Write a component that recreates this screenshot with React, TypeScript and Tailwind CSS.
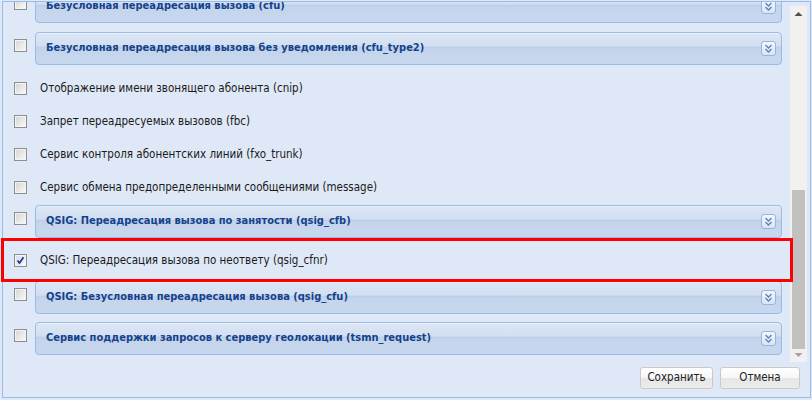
import React from "react";

const FONT = { fontFamily: "Tahoma, 'DejaVu Sans Condensed', 'Liberation Sans', sans-serif" };

function Check({ checked = false }: { checked?: boolean }) {
  return (
    <div className="w-[13px] h-[13px] border border-[#8e8e8e] bg-white shrink-0 flex">
      <div
        className={
          "flex-1 border border-[#f4f4f4] flex items-center justify-center " +
          (checked
            ? "bg-[linear-gradient(135deg,#d5deea,#f6f9fc)]"
            : "bg-[linear-gradient(135deg,#d6d6d6,#f8f8f8)]")
        }
      >
        {checked && (
          <svg width="9" height="9" viewBox="0 0 9 9">
            <path d="M1.5 4.5 L3.5 7 L7.5 1.2" fill="none" stroke="#1c3c8c" strokeWidth="1.8" />
          </svg>
        )}
      </div>
    </div>
  );
}

function Expand() {
  return (
    <div className="w-[15px] h-[15px] rounded-[3px] border border-[#97b4dd] bg-[linear-gradient(to_bottom,#f3f7fc,#d9e4f3)] flex items-center justify-center shrink-0">
      <svg width="9" height="9" viewBox="0 0 9 9">
        <path d="M1.5 1 L4.5 4 L7.5 1" fill="none" stroke="#5a80b8" strokeWidth="1.3" />
        <path d="M1.5 5 L4.5 8 L7.5 5" fill="none" stroke="#5a80b8" strokeWidth="1.3" />
      </svg>
    </div>
  );
}

function FsRow({ label, className = "" }: { label: string; className?: string }) {
  return (
    <div className={"flex items-start pl-[11px] pr-[8px] " + className}>
      <div className="mt-[7px]">
        <Check />
      </div>
      <div className="ml-[8px] flex-1 h-[33px] rounded-[4px] border border-[#99bbe8] bg-[linear-gradient(to_bottom,#dce7f5_0%,#d2dff1_42%,#bccfea_46%,#c3d4ec_52%,#c7d8ee_100%)] flex items-center pl-[10px] pr-[5px] shadow-[inset_0_1px_0_#eaf1fa]">
        <span className="flex-1 text-[11px] font-bold text-[#15428b] whitespace-nowrap">{label}</span>
        <Expand />
      </div>
    </div>
  );
}

function PlainRow({ label, checked = false, className = "" }: { label: string; checked?: boolean; className?: string }) {
  return (
    <div className={"h-[33px] flex items-center pl-[11px] " + className}>
      <Check checked={checked} />
      <span className="ml-[13px] text-[11.5px] text-[#1a1a1a] whitespace-nowrap">{label}</span>
    </div>
  );
}

function Btn({ label, w }: { label: string; w: string }) {
  return (
    <div
      className={
        "h-[22px] rounded-[3px] border border-[#c9c9c9] bg-[linear-gradient(to_bottom,#ffffff_0%,#f6f6f6_50%,#e6e6e6_51%,#ececec_100%)] flex items-center justify-center text-[11.5px] text-[#222] " +
        w
      }
    >
      {label}
    </div>
  );
}

export default function App() {
  return (
    <div className="w-[812px] h-[400px] bg-[#dfe8f6] overflow-hidden" style={FONT}>
      <div className="mt-[1px] ml-[2px] mr-[1px] h-[397px] border border-[#99bbe8] flex flex-col">
        <div className="flex h-[360px]">
          <div className="flex-1 relative z-10 [clip-path:inset(0_-12px_0_-12px)]">
            <div className="mt-[-12px]">
              <FsRow label="Безусловная переадресация вызова (cfu)" />
              <FsRow label="Безусловная переадресация вызова без уведомления (cfu_type2)" className="mt-[9px]" />
              <PlainRow label="Отображение имени звонящего абонента (cnip)" className="mt-[7px]" />
              <PlainRow label="Запрет переадресуемых вызовов (fbc)" />
              <PlainRow label="Сервис контроля абонентских линий (fxo_trunk)" />
              <PlainRow label="Сервис обмена предопределенными сообщениями (message)" />
              <FsRow label="QSIG: Переадресация вызова по занятости (qsig_cfb)" className="mt-[1px]" />
              <div className="relative mt-[6px]">
                <PlainRow label="QSIG: Переадресация вызова по неответу (qsig_cfnr)" checked />
                <div className="absolute top-[-6px] bottom-[-5px] left-[-2px] right-[-3px] border-[3px] border-[#ff0000] pointer-events-none" />
              </div>
              <FsRow label="QSIG: Безусловная переадресация вызова (qsig_cfu)" className="mt-[4px]" />
              <FsRow label="Сервис поддержки запросов к серверу геолокации (tsmn_request)" className="mt-[8px]" />
            </div>
          </div>
          <div className="w-[17px] mr-[3px] mt-[4px] h-[356px] bg-[#f1f1f1] flex flex-col items-center">
            <svg width="17" height="17" viewBox="0 0 17 17" className="shrink-0">
              <path d="M4.5 10 L8.5 6 L12.5 10 Z" fill="#505050" />
            </svg>
            <div className="mt-[167px] w-[13px] h-[159px] bg-[#c1c1c1]" />
            <svg width="17" height="13" viewBox="0 0 17 13" className="shrink-0">
              <path d="M4.5 4 L8.5 8 L12.5 4 Z" fill="#a3a3a3" />
            </svg>
          </div>
        </div>
        <div className="flex justify-end gap-[7px] pr-[10px] pt-[5px]">
          <Btn label="Сохранить" w="w-[73px]" />
          <Btn label="Отмена" w="w-[80px]" />
        </div>
      </div>
    </div>
  );
}
